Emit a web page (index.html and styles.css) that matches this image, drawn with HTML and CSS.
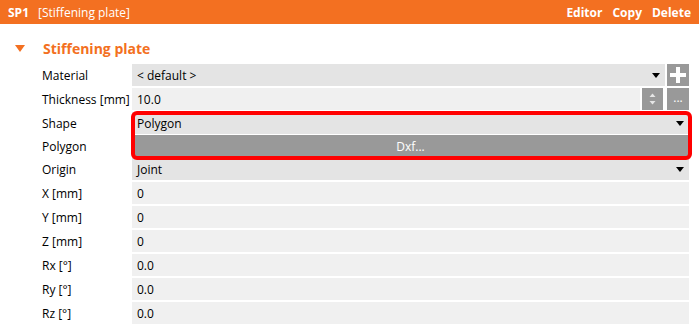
FILE: index.html
```html
<!DOCTYPE html>
<html>
<head>
<meta charset="utf-8">
<link rel="stylesheet" href="styles.css">
</head>
<body>
<div class="topbar">
  <div class="top-left"><span class="id">SP1</span><span class="name">[Stiffening plate]</span></div>
  <div class="top-right"><span>Editor</span><span>Copy</span><span>Delete</span></div>
</div>
<div class="section">
  <span class="caret"></span><span class="section-title">Stiffening plate</span>
</div>
<div class="form">
  <div class="label">Material</div>
  <div class="ctl">
    <div class="field drop">&lt; default &gt;<span class="arrow"></span></div>
    <div class="btn plus"><svg width="22" height="22" viewBox="0 0 22 22"><rect x="9" y="3" width="4" height="16" fill="#fff"/><rect x="3" y="9" width="16" height="4" fill="#fff"/></svg></div>
  </div>

  <div class="label">Thickness [mm]</div>
  <div class="ctl">
    <div class="field text">10.0</div>
    <div class="btn spin"><svg width="21" height="22" viewBox="0 0 21 22"><path d="M7.5 9 L10.5 5.5 L13.5 9 Z" fill="#e6e6e6"/><path d="M7.5 13 L10.5 16.5 L13.5 13 Z" fill="#e6e6e6"/></svg></div>
    <div class="btn more">...</div>
  </div>

  <div class="label">Shape</div>
  <div class="ctl">
    <div class="field drop wide">Polygon<span class="arrow"></span></div>
  </div>

  <div class="label tight">Polygon</div>
  <div class="ctl tight">
    <div class="dxf">Dxf...</div>
  </div>

  <div class="label tight">Origin</div>
  <div class="ctl tight">
    <div class="field drop wide">Joint<span class="arrow"></span></div>
  </div>

  <div class="label">X [mm]</div>
  <div class="ctl"><div class="field text wide">0</div></div>
  <div class="label">Y [mm]</div>
  <div class="ctl"><div class="field text wide">0</div></div>
  <div class="label">Z [mm]</div>
  <div class="ctl"><div class="field text wide">0</div></div>
  <div class="label">Rx [°]</div>
  <div class="ctl"><div class="field text wide">0.0</div></div>
  <div class="label">Ry [°]</div>
  <div class="ctl"><div class="field text wide">0.0</div></div>
  <div class="label">Rz [°]</div>
  <div class="ctl"><div class="field text wide">0.0</div></div>

  <div class="highlight"></div>
</div>
</body>
</html>
```
FILE: styles.css
```css
* { box-sizing: border-box; }
html, body { margin: 0; padding: 0; background: #fff; }
body {
  font-family: "Open Sans", "Noto Sans", sans-serif;
  font-size: 12px;
  color: #000;
  width: 699px;
  height: 330px;
  overflow: hidden;
}
.topbar {
  height: 24px;
  background: #f37021;
  color: #fff;
  display: flex;
  align-items: center;
  justify-content: space-between;
  padding: 0 8px 0 8px;
}
.top-left { display: flex; gap: 9px; align-items: center; }
.top-left .id { font-weight: 700; }
.top-right { display: flex; gap: 10px; font-weight: 700; }
.section {
  height: 40px;
  display: flex;
  align-items: center;
  padding-top: 8px;
}
.caret {
  width: 0; height: 0;
  margin-left: 15px;
  margin-right: 18px;
  border-left: 5px solid transparent;
  border-right: 5px solid transparent;
  border-top: 7px solid #f37021;
}
.section-title {
  color: #f37021;
  font-weight: 700;
  font-size: 14px;
}
.form {
  position: relative;
  display: grid;
  grid-template-columns: 132px 557px;
  row-gap: 2px;
}
.label {
  padding-left: 42px;
  height: 22px;
  line-height: 23px;
  white-space: nowrap;
}
.label.tight, .ctl.tight { margin-top: -1px; }
.ctl { display: flex; height: 22px; }
.field {
  height: 22px;
  line-height: 23px;
  padding-left: 5px;
  position: relative;
}
.drop { background: #e4e4e4; width: 533px; }
.text { background: #f0f0f0; width: 508px; }
.wide { width: 557px; }
.arrow {
  position: absolute;
  right: 5px;
  top: 9px;
  width: 0; height: 0;
  border-left: 4px solid transparent;
  border-right: 4px solid transparent;
  border-top: 5px solid #000;
}
.btn {
  background: #999;
  height: 22px;
  width: 22px;
  color: #fff;
}
.plus { margin-left: 2px; }
.plus svg, .spin svg { display: block; }
.spin { margin-left: 2px; width: 21px; }
.more {
  margin-left: 4px;
  text-align: center;
  line-height: 20px;
  font-size: 12px;
}
.dxf {
  width: 557px;
  height: 22px;
  background: #999;
  color: #fff;
  text-align: center;
  line-height: 23px;
}
.highlight {
  position: absolute;
  left: 131px;
  top: 47px;
  width: 561px;
  height: 49px;
  border: 4px solid #ff0000;
  border-radius: 6px;
  pointer-events: none;
}
```
